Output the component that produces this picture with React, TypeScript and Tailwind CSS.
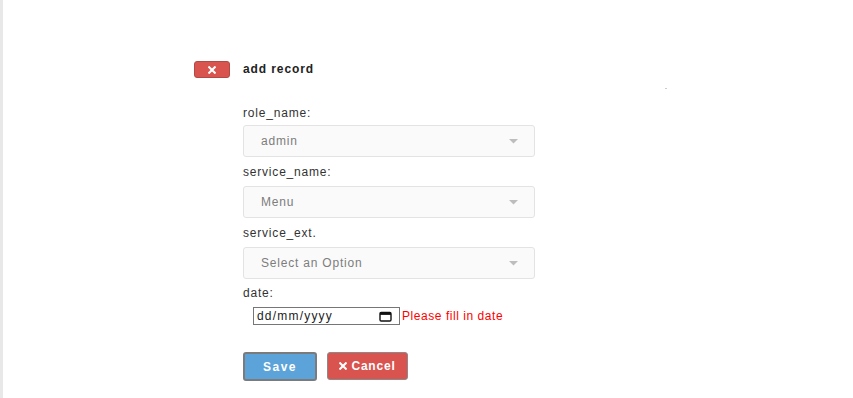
import React from "react";

function Caret() {
  return (
    <svg width="9" height="5" viewBox="0 0 9 5" className="block">
      <path d="M0 0 L9 0 L4.5 4.5 Z" fill="#bdbdbd" />
    </svg>
  );
}

function XIcon({ size = 9 }: { size?: number }) {
  return (
    <svg width={size} height={size} viewBox="0 0 10 10" className="block">
      <path d="M1.5 1.5 L8.5 8.5 M8.5 1.5 L1.5 8.5" stroke="#fff" strokeWidth="2.6" strokeLinecap="square" />
    </svg>
  );
}

function SelectBox({ text }: { text: string }) {
  return (
    <div className="flex h-[32px] w-[292px] items-center justify-between rounded-[3px] border border-[#e3e3e3] bg-[#fafafa] pl-[17px] pr-[16px]">
      <span className="text-[12px] tracking-[0.8px] text-[#7d7d7d]">{text}</span>
      <Caret />
    </div>
  );
}

export default function App() {
  return (
    <div
      className="relative h-[398px] w-full overflow-hidden border-l-[3px] border-[#e8e8e8] bg-white pt-[61px] text-[#333]"
      style={{ fontFamily: '"Liberation Sans", Arial, sans-serif' }}
    >
      <div className="flex h-[17px] items-center pl-[191px]">
        <button className="flex h-[17px] w-[36px] items-center justify-center rounded-[3px] border border-[#b04a47] bg-[#d9534f]">
          <XIcon size={8} />
        </button>
        <span className="ml-[13px] text-[12px] leading-[17px] font-bold tracking-[0.9px] text-[#222]">add record</span>
      </div>
      <div className="absolute left-[662px] top-[88px] h-px w-[2px] bg-[#cccccc]" />

      <div className="pl-[240px]">
        <div className="mt-[23px] flex h-[24px] items-center text-[12px] tracking-[0.8px]">role_name:</div>
        <SelectBox text="admin" />
        <div className="flex h-[29px] items-center text-[12px] tracking-[0.8px]">service_name:</div>
        <SelectBox text="Menu" />
        <div className="flex h-[29px] items-center text-[12px] tracking-[0.8px]">service_ext.</div>
        <SelectBox text="Select an Option" />
        <div className="flex h-[27px] items-center pt-[1px] text-[12px] tracking-[0.8px]">date:</div>
        <div className="mt-[1px] flex items-center pl-[10px]">
          <div className="flex h-[18px] w-[147px] items-center justify-between border border-[#767676] bg-white pl-[3px] pr-[7px]">
            <span className="text-[12px] tracking-[1.2px] text-[#222]">dd/mm/yyyy</span>
            <svg width="13" height="11" viewBox="0 0 13 11" className="block">
              <rect x="1" y="1.5" width="11" height="8.5" rx="1.2" fill="none" stroke="#111" strokeWidth="1.4" />
              <rect x="1" y="1.5" width="11" height="2.4" fill="#111" />
            </svg>
          </div>
          <span className="ml-[2px] text-[12px] tracking-[0.55px] text-[#ff0000]">Please fill in date</span>
        </div>
        <div className="mt-[27px] flex items-start gap-[10px]">
          <button className="flex h-[29px] w-[74px] items-center justify-center rounded-[3px] border-2 border-[#7b7b7b] bg-[#5ba3d9] text-[12px] font-bold tracking-[1.5px] text-white">
            Save
          </button>
          <button className="flex h-[28px] w-[81px] items-center justify-center gap-[4px] rounded-[3px] border border-[#8a8a8a] bg-[#d9534f] text-[12px] font-bold tracking-[0.8px] text-white">
            <XIcon size={8} />
            <span>Cancel</span>
          </button>
        </div>
      </div>
    </div>
  );
}
